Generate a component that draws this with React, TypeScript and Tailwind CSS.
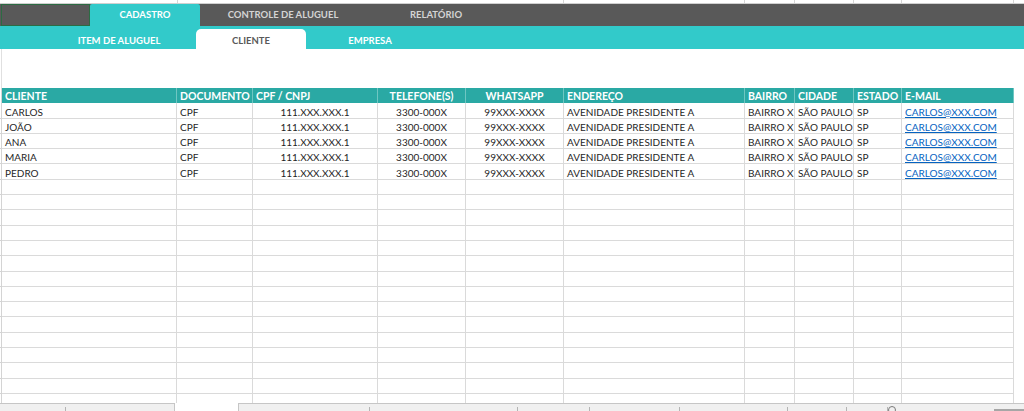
import React from "react"

type Col = { key: string; label: string; w: string; align: "left" | "center"; headAlign: "left" | "center" }

const cols: Col[] = [
  { key: "cliente", label: "CLIENTE", w: "w-[175px]", align: "left", headAlign: "left" },
  { key: "doc", label: "DOCUMENTO", w: "w-[76px]", align: "left", headAlign: "left" },
  { key: "cpf", label: "CPF / CNPJ", w: "w-[125px]", align: "center", headAlign: "left" },
  { key: "tel", label: "TELEFONE(S)", w: "w-[88px]", align: "center", headAlign: "center" },
  { key: "whats", label: "WHATSAPP", w: "w-[98px]", align: "center", headAlign: "center" },
  { key: "end", label: "ENDEREÇO", w: "w-[181px]", align: "left", headAlign: "left" },
  { key: "bairro", label: "BAIRRO", w: "w-[50px]", align: "left", headAlign: "left" },
  { key: "cidade", label: "CIDADE", w: "w-[59px]", align: "left", headAlign: "left" },
  { key: "estado", label: "ESTADO", w: "w-[48px]", align: "left", headAlign: "left" },
  { key: "email", label: "E-MAIL", w: "w-[112px]", align: "left", headAlign: "left" },
]

const nomes = ["CARLOS", "JOÃO", "ANA", "MARIA", "PEDRO"]

const clientes = nomes.map((nome) => ({
  cliente: nome,
  doc: "CPF",
  cpf: "111.XXX.XXX.1",
  tel: "3300-000X",
  whats: "99XXX-XXXX",
  end: "AVENIDADE PRESIDENTE A",
  bairro: "BAIRRO X",
  cidade: "SÃO PAULO",
  estado: "SP",
  email: "CARLOS@XXX.COM",
}))

// linhas vazias da planilha abaixo dos dados
const emptyRows = Array.from({ length: 16 })

function Cell({ col, children }: { col: Col; children?: React.ReactNode }) {
  return (
    <div
      className={`${col.w} shrink-0 h-full border-r border-[#dadada] px-[3px] flex items-end pb-[1px] leading-[10px] whitespace-nowrap ${
        col.align === "center" ? "justify-center" : "justify-start"
      }`}
    >
      {children}
    </div>
  )
}

export default function App() {
  return (
    <div className="w-[1024px] h-[411px] overflow-hidden bg-white flex flex-col font-['Lato',sans-serif]">
      {/* faixa de células no topo */}
      <div className="h-[4px] shrink-0 border-b border-[#d0d0d0] flex">
        <div className="w-[178px] border-r border-[#d6d6d6]" />
        <div className="w-[386px] border-r border-[#d6d6d6]" />
        <div className="w-[181px] border-r border-[#d6d6d6]" />
        <div className="w-[50px] border-r border-[#d6d6d6]" />
        <div className="w-[59px] border-r border-[#d6d6d6]" />
        <div className="w-[48px] border-r border-[#d6d6d6]" />
        <div className="w-[112px] border-r border-[#d6d6d6]" />
      </div>

      {/* menu principal */}
      <div className="h-[22px] shrink-0 bg-[#595959] flex items-stretch text-[9.5px] font-bold">
        <div className="ml-[1px] w-[89px] border border-[#2c6b43]" />
        <div className="w-[110px] bg-[#32caca] rounded-t-[2px] text-white flex items-center justify-center">
          CADASTRO
        </div>
        <div className="w-[166px] text-[#d4d4d4] flex items-center justify-center">CONTROLE DE ALUGUEL</div>
        <div className="w-[140px] text-[#d4d4d4] flex items-center justify-center">RELATÓRIO</div>
      </div>

      {/* submenu */}
      <div className="h-[23px] shrink-0 bg-[#32caca] flex items-end text-[9.5px] font-bold">
        <div className="w-[196px] h-[20px] pl-[64px] flex items-center pt-[4px]">
          <span className="w-[110px] text-center text-white">ITEM DE ALUGUEL</span>
        </div>
        <div className="w-[110px] h-[20px] bg-white rounded-t-[5px] text-[#595959] flex items-center justify-center pt-[4px]">
          CLIENTE
        </div>
        <div className="w-[128px] h-[20px] text-white flex items-center justify-center pt-[4px]">EMPRESA</div>
      </div>

      <div className="h-[39px] shrink-0 flex">
        <div className="w-[2px] border-r border-[#e0e0e0]" />
      </div>

      {/* tabela */}
      <div className="h-[315px] shrink-0 overflow-hidden text-[10px] text-[#1f1f1f]">
        <div className="h-[15.3px] flex">
          <div className="w-[2px] shrink-0 border-r border-[#d4d4d4]" />
          {cols.map((c) => (
            <div
              key={c.key}
              className={`${c.w} shrink-0 h-full bg-[#2aa9a4] border-r border-[#6fc6c2] px-[3px] flex items-end pb-[2px] leading-[10px] text-[10.5px] font-bold text-white whitespace-nowrap ${
                c.headAlign === "center" ? "justify-center" : "justify-start"
              }`}
            >
              {c.label}
            </div>
          ))}
        </div>

        {clientes.map((row, i) => (
          <div key={i} className="h-[15.3px] flex">
            <div className="w-[2px] shrink-0 border-r border-b border-[#d4d4d4]" />
            <div className="flex border-b border-[#dadada]">
              {cols.map((c) => (
                <Cell key={c.key} col={c}>
                  {c.key === "email" ? (
                    <span className="text-[#0563c1] underline">{row.email}</span>
                  ) : (
                    (row as Record<string, string>)[c.key]
                  )}
                </Cell>
              ))}
            </div>
          </div>
        ))}

        {emptyRows.map((_, i) => (
          <div key={i} className="h-[15.3px] flex">
            <div className="w-[2px] shrink-0 border-r border-b border-[#d4d4d4]" />
            <div className="flex border-b border-[#dadada]">
              {cols.map((c) => (
                <Cell key={c.key} col={c} />
              ))}
            </div>
          </div>
        ))}
      </div>

      {/* barra de abas da planilha */}
      <div className="h-[8px] shrink-0 flex">
        <div className="w-[175px] bg-[#f0f0f0] border-t border-r border-[#c6c6c6] flex">
          <div className="w-[66px] mt-[3px] border-r border-[#b4b4b4]" />
        </div>
        <div className="w-[63px] bg-white" />
        <div className="flex-1 bg-[#f0f0f0] border-t border-l border-[#c6c6c6] flex items-start">
          <div className="w-[131px] h-full pt-[3px]">
            <div className="h-full border-r border-[#b4b4b4]" />
          </div>
          <div className="w-[148px] h-full pt-[3px]">
            <div className="h-full border-r border-[#b4b4b4]" />
          </div>
          <div className="w-[72px] h-full pt-[3px]">
            <div className="h-full border-r border-[#b4b4b4]" />
          </div>
          <div className="w-[90px] h-full pt-[3px]">
            <div className="h-full border-r border-[#b4b4b4]" />
          </div>
          <div className="w-[108px] h-full pt-[3px]">
            <div className="h-full border-r border-[#b4b4b4]" />
          </div>
          <div className="w-[59px] h-full pt-[3px]">
            <div className="h-full border-r border-[#b4b4b4]" />
          </div>
          <div className="w-[41px] h-full pt-[3px]">
            <div className="h-full border-r border-[#b4b4b4]" />
          </div>
          <div className="w-[34px] h-full pt-[2px]">
            <div className="w-[8px] h-[8px] rounded-full border border-[#7a7a7a]" />
          </div>
          <div className="w-[72px]" />
          <div className="flex-1 h-full flex items-end">
            <div className="w-full h-[2px] bg-[#a6a6a6]" />
          </div>
        </div>
      </div>
    </div>
  )
}
